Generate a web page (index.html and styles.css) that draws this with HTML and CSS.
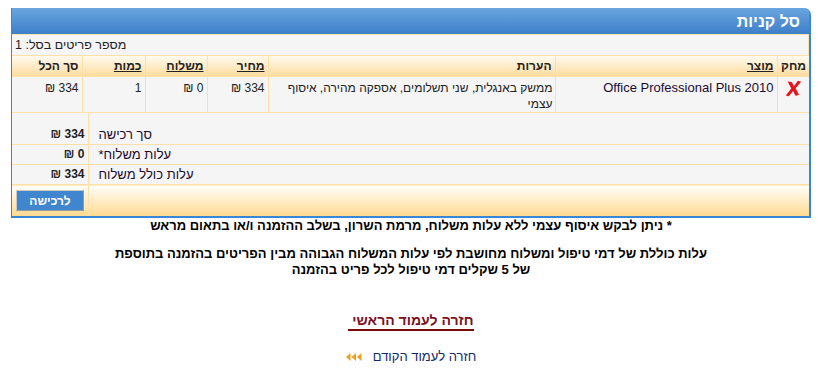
FILE: index.html
```html
<!DOCTYPE html>
<html lang="he" dir="rtl">
<head>
<meta charset="utf-8">
<link rel="stylesheet" href="styles.css">
</head>
<body>
<div class="cart">
  <div class="cart-title">סל קניות</div>
  <div class="cart-count">מספר פריטים בסל: 1</div>
  <table class="items">
    <colgroup>
      <col class="c-del"><col class="c-prod"><col class="c-notes"><col class="c-price"><col class="c-ship"><col class="c-qty"><col class="c-total">
    </colgroup>
    <thead>
      <tr>
        <th>מחק</th>
        <th><span class="u">מוצר</span></th>
        <th>הערות</th>
        <th><span class="u">מחיר</span></th>
        <th><span class="u">משלוח</span></th>
        <th><span class="u">כמות</span></th>
        <th>סך הכל</th>
      </tr>
    </thead>
    <tbody>
      <tr>
        <td class="del"><svg width="17" height="17" viewBox="0 0 17 17"><path d="M2.6 1.6 L6.8 1.9 L8.9 6.2 L12.9 0.8 L16.2 1.7 L10.6 8.2 L14.1 14.9 L10.4 15.8 L8.1 10.9 L3.9 16.3 L0.8 15.4 L6.3 8.5 Z" fill="#e8141c"/></svg></td>
        <td class="prod">Office Professional Plus 2010</td>
        <td class="notes">ממשק באנגלית, שני תשלומים, אספקה מהירה, איסוף עצמי</td>
        <td>334 ₪</td>
        <td>0 ₪</td>
        <td>1</td>
        <td>334 ₪</td>
      </tr>
    </tbody>
  </table>
  <table class="summary">
    <colgroup><col><col class="c-val"></colgroup>
    <tr class="first"><td class="lbl">סך רכישה</td><td class="val">334 ₪</td></tr>
    <tr><td class="lbl">עלות משלוח*</td><td class="val">0 ₪</td></tr>
    <tr><td class="lbl">עלות כולל משלוח</td><td class="val">334 ₪</td></tr>
    <tr class="buy-row"><td></td><td class="btn-cell"><button class="buy">לרכישה</button></td></tr>
  </table>
</div>
<div class="notes-text">
  <p class="n1">* ניתן לבקש איסוף עצמי ללא עלות משלוח, מרמת השרון, בשלב ההזמנה ו/או בתאום מראש</p>
  <p class="n2">עלות כוללת של דמי טיפול ומשלוח מחושבת לפי עלות המשלוח הגבוהה מבין הפריטים בהזמנה בתוספת<br>של 5 שקלים דמי טיפול לכל פריט בהזמנה</p>
</div>
<div class="links">
  <a class="home" href="#">חזרה לעמוד הראשי&nbsp;</a>
  <a class="back" href="#">חזרה לעמוד הקודם<span class="arrows"><svg width="16" height="8" viewBox="0 0 16 8"><path d="M0 4 L4.5 0 V8 Z M5.5 4 L10 0 V8 Z M11 4 L15.5 0 V8 Z" fill="#f0a020"/></svg></span></a>
</div>
</body>
</html>
```
FILE: styles.css
```css
body {
  margin: 8px;
  font-family: "Liberation Sans", Arial, sans-serif;
  font-size: 12px;
  color: #000;
  background: #fff;
}
.cart {
  width: 797px;
  margin: 0 auto;
  border-left: 1px solid #3a86d6;
  border-right: 2px solid #3a86d6;
  border-bottom: 2px solid #3a86d6;
  border-top-right-radius: 7px;
  background: #fff;
}
.cart-title {
  height: 26px;
  line-height: 27px;
  background: linear-gradient(#6aa5de, #3d80c9);
  color: #fff;
  font-weight: bold;
  font-size: 16px;
  padding-right: 9px;
  border-top-right-radius: 5px;
  border-bottom: 1px solid #fce3b3;
}
.cart-count {
  height: 20px;
  line-height: 20px;
  background: #f5f5f5;
  text-align: left;
  padding-left: 3px;
  color: #222;
  font-size: 12.5px;
  border-right: 1px solid #fde0a8;
  border-bottom: 1px solid #fde0a8;
}
.items, .summary {
  width: 100%;
  border-collapse: collapse;
  table-layout: fixed;
}
.c-del { width: 32px; }
.c-prod { width: 222px; }
.c-notes { width: 287px; }
.c-price { width: 61px; }
.c-ship { width: 62px; }
.c-qty { width: 63px; }
.c-total { width: 70px; }
.items th {
  height: 20px;
  padding: 0 3px;
  background: linear-gradient(#fffaf0, #ffdca0);
  font-weight: bold;
  color: #222;
  text-align: right;
  border: 1px solid #fde0a8;
  border-top: 0;
}
.items th:first-child { border-right: 0; }
.items th:last-child { border-left: 0; }
.u { text-decoration: underline; }
.items td {
  height: 32px;
  padding: 3px 3px 0;
  vertical-align: top;
  background: #f5f5f5;
  color: #222;
  line-height: 16px;
  border: 1px solid #fde0a8;
}
.items td:first-child { border-right: 0; }
.items td:last-child { border-left: 0; }
.items td.prod {
  color: #1a0a33;
  font-size: 13px;
}
.items td.del {
  text-align: center;
  padding-top: 3px;
}
.items td.notes { padding-right: 2px; }
.c-val { width: 76px; }
.summary td {
  background: #f5f5f5;
  height: 19px;
  line-height: 19px;
  padding: 0;
  border-bottom: 1px solid #fde0a8;
}
.summary td.lbl {
  text-align: left;
  padding-left: 10px;
  color: #1a0a2e;
  font-size: 13px;
}
.summary td.val {
  text-align: right;
  padding-right: 3px;
  font-weight: bold;
  color: #222;
  font-size: 12px;
  border-right: 1px solid #fde0a8;
}
.summary tr.first td {
  padding-top: 12px;
}
.summary tr.buy-row td {
  height: 31px;
  background: linear-gradient(#fffefb, #ffd98e);
  border-bottom: 0;
}
.summary td.btn-cell {
  text-align: left;
  padding-left: 4px;
  vertical-align: middle;
  border-right: 1px solid #fde0a8;
}
.buy {
  display: inline-block;
  vertical-align: middle;
  width: 68px;
  height: 21px;
  background: #3f86cf;
  color: #fff;
  font-family: "Liberation Sans", Arial, sans-serif;
  font-weight: bold;
  font-size: 12px;
  border: 1px solid #c9c9c9;
  border-bottom-color: #9a9a9a;
  border-right-color: #9a9a9a;
  padding: 0;
}
.notes-text {
  text-align: center;
  font-weight: bold;
  font-size: 13px;
  color: #000;
}
.notes-text p { margin: 0; line-height: 16px; }
.n2 { padding-top: 12px; }
.links {
  text-align: center;
  padding-top: 34px;
}
.home {
  display: inline-block;
  color: #7a1020;
  font-weight: bold;
  font-size: 14px;
  text-decoration: none;
  border-bottom: 2px solid #7a0a0a;
  line-height: 17px;
}
.back {
  display: block;
  margin-top: 18px;
  color: #122a6a;
  font-size: 13px;
  text-decoration: none;
}
.arrows {
  display: inline-block;
  margin-right: 11px;
}
```
